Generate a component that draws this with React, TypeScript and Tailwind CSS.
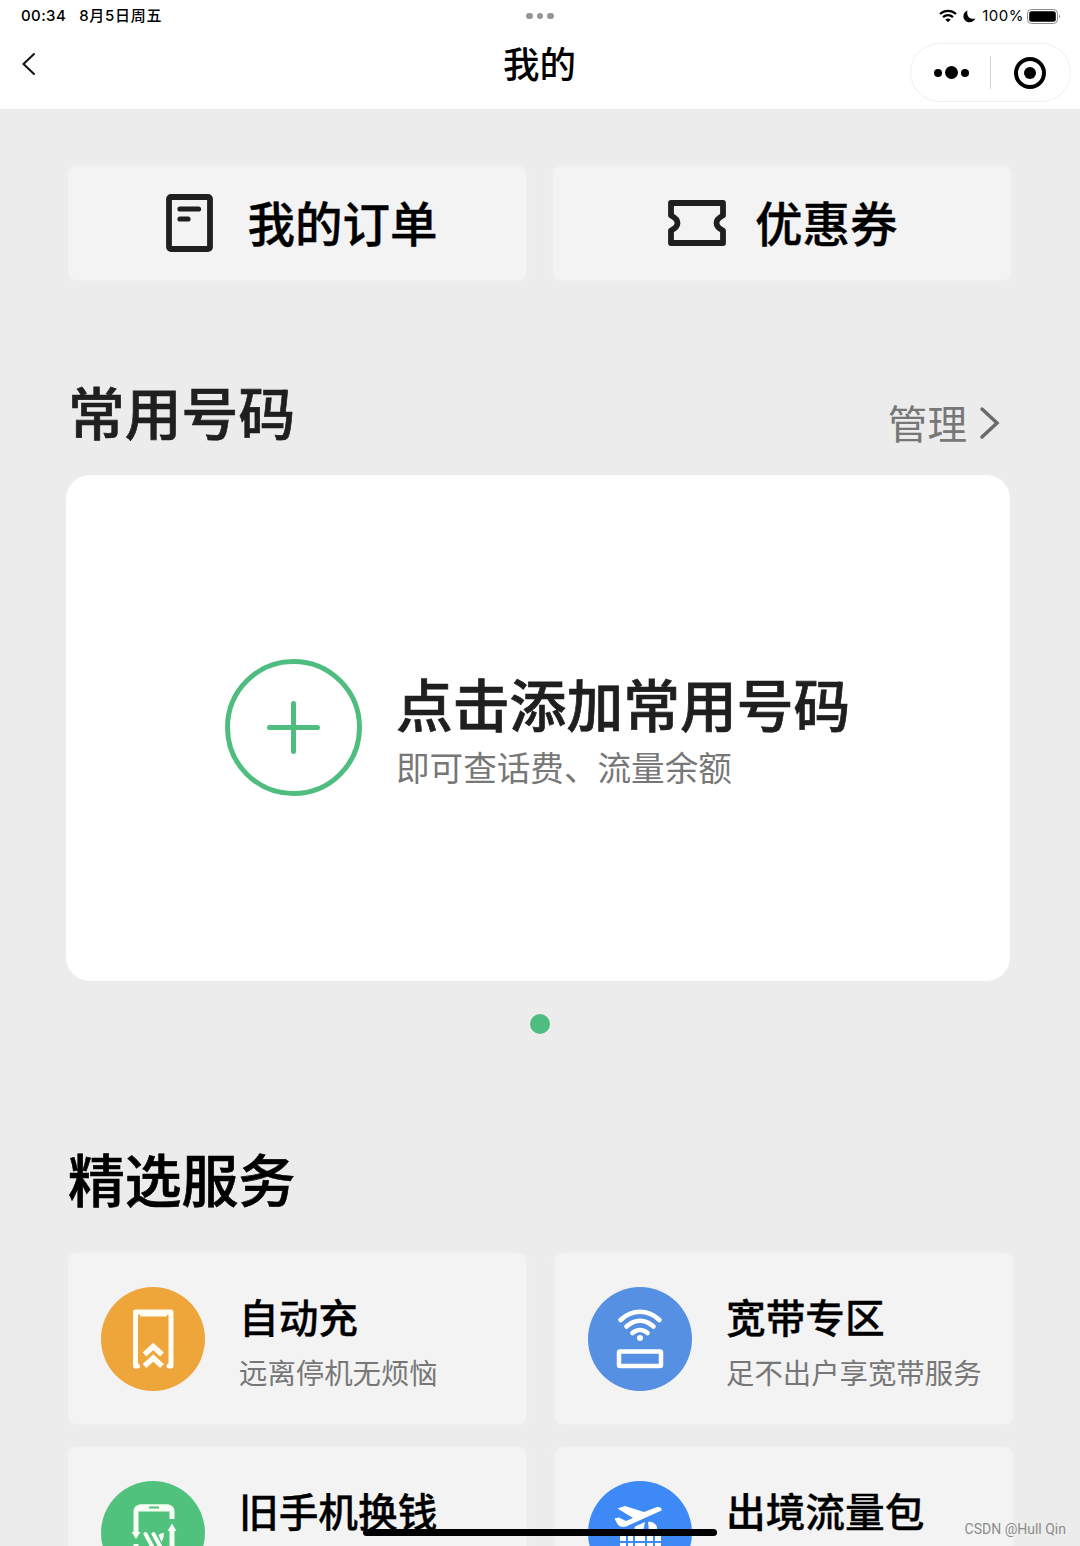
import React from 'react';

interface Service {
  title: string;
  desc?: string;
  color: string;
  icon: React.ReactNode;
}

function OrderIcon() {
  return (
    <svg width="48" height="58" viewBox="0 0 48 58" fill="none" stroke="#1f1f1f">
      <rect x="3" y="3" width="41" height="52" rx="2" strokeWidth="5.8" />
      <path d="M14 15h18.500M14 25h8" strokeWidth="5.200" strokeLinecap="round" />
    </svg>
  );
}

function CouponIcon() {
  return (
    <svg width="58" height="46" viewBox="0 0 58 46" fill="none" stroke="#1f1f1f" strokeWidth="5.800" strokeLinejoin="round">
      <path d="M3 3H55V15.500C50 18 48.500 20.500 48.500 23C48.500 25.500 50 28 55 30.500V43H3V30.500C8 28 9.500 25.500 9.500 23C9.500 20.500 8 18 3 15.500Z" />
    </svg>
  );
}

function AutoChargeIcon() {
  return (
    <svg width="104" height="104" viewBox="0 0 104 104" fill="none" stroke="#fffdf5">
      <path d="M36.500 79H34.500V25H70V79H68" strokeWidth="5" strokeLinejoin="round" strokeLinecap="round" />
      <path d="M37 24H68L65.500 29.500H39.500Z" fill="#fffdf5" stroke="none" />
      <path d="M43.500 67.500L52.200 59.500L61 67.500M43.500 79L52.200 71L61 79" strokeWidth="5.500" />
    </svg>
  );
}

function BroadbandIcon() {
  return (
    <svg width="104" height="104" viewBox="0 0 104 104" fill="none" stroke="#fff">
      <path d="M32.500 33C44 22 60 22 71.500 33M38.500 39.500C47 32 57 32 65.500 39.500M44.500 46C49 42 55 42 59.500 46" strokeWidth="4.600" strokeLinecap="round" />
      <circle cx="52" cy="51" r="3" fill="#fff" stroke="none" />
      <rect x="31" y="64.500" width="42" height="14.500" rx="1" strokeWidth="4.500" />
    </svg>
  );
}

function TradeInIcon() {
  return (
    <svg width="104" height="104" viewBox="0 0 104 104" fill="none" stroke="#f8fff5">
      <path d="M35 53V31Q35 26 40 26H66Q71 26 71 31V38" strokeWidth="5" />
      <path d="M38 27H68" strokeWidth="7" />
      <path d="M48 26.500H58" stroke="#50c27d" strokeWidth="1.800" />
      <path d="M30.500 51H39.500L35 58ZM66.500 50H75.500L71 42.500Z" fill="#f8fff5" stroke="none" />
      <path d="M71 49V78H35V63" strokeWidth="5" />
      <path d="M44.500 53L52 67M52.500 53L59.500 66" strokeWidth="4" strokeLinecap="round" />
      <path d="M57.500 54Q60 51.500 63 52Q63 57 60.500 61Z" fill="#f8fff5" stroke="none" />
    </svg>
  );
}

function AbroadIcon() {
  return (
    <svg width="104" height="104" viewBox="0 0 104 104" fill="#fff">
      <path d="M26.500 37.500L31 36.500L38 40L45 37L29.500 27.500L37 25L56 31L69 26Q74 25.500 73.500 29.500L38 45.500Q32 47 29.500 43Z" />
      <path d="M47 45.500L57 41L55 50H46Z" />
      <path d="M60 41Q66 40 69 46L69 50H61Z" />
      <path d="M32 50H73V81H32Z" />
      <path d="M39 50V81M46 50V81M58 50V81M66 50V81M32 61H73" stroke="#3d8af7" strokeWidth="2" />
    </svg>
  );
}

const services: Service[] = [
  { title: '自动充', desc: '远离停机无烦恼', color: 'bg-[#eea53a]', icon: <AutoChargeIcon /> },
  { title: '宽带专区', desc: '足不出户享宽带服务', color: 'bg-[#5590e2]', icon: <BroadbandIcon /> },
  { title: '旧手机换钱', color: 'bg-[#50c27d]', icon: <TradeInIcon /> },
  { title: '出境流量包', color: 'bg-[#3d8af7]', icon: <AbroadIcon /> },
];

function StatusBar() {
  return (
    <div className="grid h-8 grid-cols-3 items-center pr-[21px] pl-[21px] font-['Inter','Noto_Sans_CJK_SC',sans-serif] text-[15px] font-medium text-black">
      <div className="-mt-px flex gap-[13px] leading-none">
        <span className="tracking-[0.400px]">00:34</span>
        <span className="tracking-[0.700px]">8月5日周五</span>
      </div>
      <div className="flex justify-center gap-1">
        {[0, 1, 2].map((i) => (
          <span key={i} className="size-[6.500px] rounded-full bg-[#969696]" />
        ))}
      </div>
      <div className="flex items-center justify-end">
        <svg width="18" height="14" viewBox="0 0 18 14" fill="none" stroke="#000" strokeWidth="2.300">
          <path d="M1 5C5.500 0.800 12.500 0.800 17 5M4 8.200C7 5.500 11 5.500 14 8.200" />
          <path d="M6.200 10.500Q9 8.300 11.800 10.500L9 13.300Z" fill="#000" stroke="none" />
        </svg>
        <svg className="ml-[6px]" width="13" height="13" viewBox="0 0 13 13">
          <path d="M4.500 0.500C3.200 5.500 6.500 10 12.500 8.600C10.500 12.500 5.500 13.600 2.500 10.800C-1 7.500 0 2.200 4.500 0.500Z" />
        </svg>
        <span className="-mt-px ml-[6px] leading-none font-normal tracking-[0.500px]">100%</span>
        <svg className="-mr-[2px] ml-[3px]" width="34" height="15" viewBox="0 0 34 15" fill="none">
          <rect x="0.500" y="0.500" width="30" height="14" rx="4" stroke="#8d8d8d" />
          <rect x="2.200" y="2.200" width="26.600" height="10.600" rx="2.500" fill="#000" />
          <path d="M32 5.500Q34 7.500 32 9.500Z" fill="#8d8d8d" />
        </svg>
      </div>
    </div>
  );
}

function NavBar() {
  return (
    <div className="grid h-[77px] grid-cols-3 pr-[9px] pl-[21px]">
      <svg className="mt-5" width="15" height="24" viewBox="0 0 15 24" fill="none" stroke="#111" strokeWidth="2">
        <path d="M13 2L2.500 12L13 22" strokeLinecap="round" />
      </svg>
      <h1 className="mt-[13px] -ml-[13px] text-center text-[36.500px] leading-[36px] font-medium text-black">我的</h1>
      <div className="mt-[11px] flex h-[59px] w-[161px] items-center justify-self-end rounded-full border border-[#efefef]">
        <div className="flex w-[79px] items-center justify-center gap-[3px] pl-[2px]">
          <span className="size-2 rounded-full bg-black" />
          <span className="size-[13px] rounded-full bg-black" />
          <span className="size-2 rounded-full bg-black" />
        </div>
        <span className="h-[33px] w-px bg-[#d5d5d5]" />
        <div className="flex flex-1 justify-center pr-px">
          <div className="flex size-8 items-center justify-center rounded-full border-4 border-black">
            <span className="size-3 rounded-full bg-black" />
          </div>
        </div>
      </div>
    </div>
  );
}

function ServiceCard({ service }: { service: Service }) {
  return (
    <div className="flex h-[171px] rounded-lg bg-[#f3f3f3] pt-[34px] pl-[33px] shadow-[0_0_5px_#f0f0f0]">
      <div className={`size-[103.500px] shrink-0 overflow-hidden rounded-full ${service.color}`}>{service.icon}</div>
      <div className="ml-[34.500px] whitespace-nowrap">
        <h3 className="mt-[9px] text-[39.700px] leading-[40px] font-medium text-black [-webkit-text-stroke:0.3px]">{service.title}</h3>
        {service.desc && <p className="mt-[21px] text-[28.400px] leading-[30px] text-[#777]">{service.desc}</p>}
      </div>
    </div>
  );
}

export default function App() {
  return (
    <div className="relative h-[1546px] w-[1080px] overflow-hidden bg-[#ececec] font-['Noto_Sans_CJK_SC',sans-serif]">
      <header className="h-[109px] bg-white">
        <StatusBar />
        <NavBar />
      </header>

      <main className="pr-[68px] pl-[68px]">
        {/* Shortcuts */}
        <div className="mt-[57px] mr-px grid grid-cols-2 gap-[27px]">
          <button className="flex h-[114px] items-center rounded-lg bg-[#f3f3f3] pl-[98px] shadow-[0_0_5px_#f0f0f0]">
            <OrderIcon />
            <span className="-mt-[3px] ml-[33.500px] text-[47.500px] leading-[48px] font-medium text-black [-webkit-text-stroke:0.4px]">我的订单</span>
          </button>
          <button className="flex h-[114px] items-center rounded-lg bg-[#f3f3f3] pl-[115px] shadow-[0_0_5px_#f0f0f0]">
            <CouponIcon />
            <span className="-mt-[3px] ml-[29px] text-[47.500px] leading-[48px] font-medium text-black [-webkit-text-stroke:0.4px]">优惠券</span>
          </button>
        </div>

        {/* Saved numbers */}
        <section>
          <div className="mt-[101px] flex h-[94px] justify-between">
            <h2 className="mt-1 text-[56.800px] leading-[50px] font-medium text-[#1f1f1f] [-webkit-text-stroke:0.7px]">常用号码</h2>
            <div className="mt-[22px] mr-[11px] flex h-10 items-center text-[#777]">
              <span className="-mt-[3px] text-[39.600px] leading-[40px]">管理</span>
              <svg className="ml-[12px]" width="22" height="34" viewBox="0 0 22 34" fill="none" stroke="#6b6b6b" strokeWidth="3.500">
                <path d="M3 3L18 17L3 31" strokeLinecap="round" />
              </svg>
            </div>
          </div>
          <div className="-mr-[2px] -ml-[2px] flex h-[506px] w-[944px] rounded-3xl bg-white pt-[184px] pl-[159px]">
            <svg width="137" height="137" viewBox="0 0 137 137" fill="none" stroke="#50bd80" strokeWidth="5">
              <circle cx="68.500" cy="68.500" r="66" />
              <path d="M44.500 68.500H92.500M68.500 44.500V92.500" strokeLinecap="round" />
            </svg>
            <div className="ml-[34px]">
              <h3 className="mt-[17px] text-[56.800px] leading-[52px] font-medium text-[#1f1f1f] [-webkit-text-stroke:0.7px]">点击添加常用号码</h3>
              <p className="mt-[22px] text-[33.600px] leading-[34px] text-[#777]">即可查话费、流量余额</p>
            </div>
          </div>
          <div className="mt-[33px] flex justify-center">
            <span className="size-5 rounded-full bg-[#50bd80]" />
          </div>
        </section>

        {/* Featured services */}
        <section>
          <h2 className="mt-[117px] text-[56.800px] leading-[52px] font-medium text-black [-webkit-text-stroke:0.7px]">精选服务</h2>
          <div className="mt-[50px] -mr-px grid grid-cols-2 gap-x-[29px] gap-y-[23px]">
            {services.map((s) => (
              <ServiceCard key={s.title} service={s} />
            ))}
          </div>
        </section>
      </main>

      {/* Home indicator */}
      <div className="absolute top-[1529px] left-[363px] h-[7px] w-[354px] rounded-full bg-black" />
      <span className="absolute right-[14px] bottom-[9px] font-['Roboto',sans-serif] text-[14px] leading-4 text-[#8c8c8c]">
        CSDN @Hull Qin
      </span>
    </div>
  );
}
